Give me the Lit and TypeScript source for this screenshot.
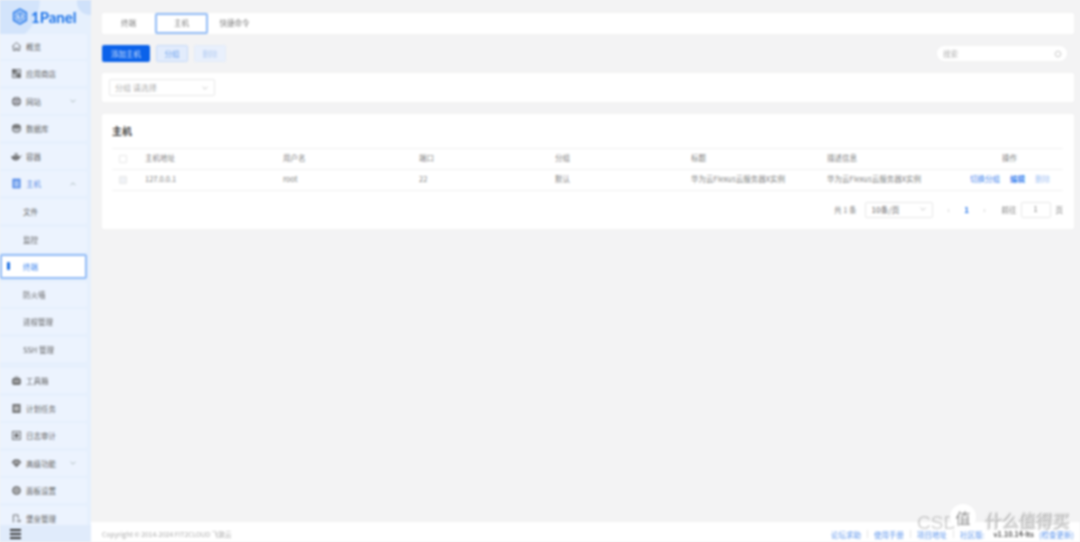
import { LitElement, html, css, svg } from "lit";
import { customElement } from "lit/decorators.js";

const icons: Record<string, unknown> = {
  home: svg`<path d="M1.500 7 7 2l5.500 5M3 6.500V12h3V9h2v3h3V6.500" />`,
  apps: svg`<rect x="2" y="2" width="4.200" height="4.200" fill="#555"/><rect x="7.800" y="2" width="4.200" height="4.200"/><rect x="2" y="7.800" width="4.200" height="4.200"/><rect x="7.800" y="7.800" width="4.200" height="4.200" fill="#555"/>`,
  globe: svg`<circle cx="7" cy="7" r="5.200" fill="#666"/><path d="M2 7h10M7 2c-3 3-3 7 0 10M7 2c3 3 3 7 0 10" stroke="#dde"/>`,
  db: svg`<ellipse cx="7" cy="4.500" rx="5" ry="2.500" fill="#666"/><path d="M2 4.500V9.500c0 1.400 2.200 2.500 5 2.500s5-1.100 5-2.500V4.500M2 7.500c0 1.400 2.200 2.500 5 2.500s5-1.100 5-2.500"/>`,
  box: svg`<path d="M1 7h10c0 3-2 4.500-5 4.500S1 10 1 7Z" fill="#666"/><path d="M11 7.500c1.500 0 2-1 2-2M5 3.500h3v3H5z"/>`,
  host: svg`<rect x="2.500" y="1.500" width="9" height="11" fill="#4a86e8" stroke="#2f6fe0"/><path d="M4 5h6M4 7.500h6M4 10h6" stroke="#e8f1fe"/>`,
  tool: svg`<rect x="2" y="4.500" width="10" height="7.500" rx="1.500" fill="#666"/><path d="M5 4.500V2.500h4v2M2 8h10" stroke="#777"/><path d="M3.500 8h7" stroke="#ddd"/>`,
  plan: svg`<rect x="2.500" y="2" width="9" height="10" fill="#666"/><path d="M4 5h6M4 7h6M4 9h6" stroke="#ddd"/>`,
  log: svg`<rect x="2" y="2" width="10" height="10"/><rect x="5" y="5" width="4" height="4" fill="#666"/>`,
  gem: svg`<path d="M1.500 5.500 4 2.500h6l2.500 3L7 11.500Z" fill="#666"/><path d="M4 5.500h6" stroke="#ddd"/>`,
  gear: svg`<circle cx="7" cy="7" r="5" fill="#777"/><circle cx="7" cy="7" r="2.500" stroke="#ddd"/>`,
  tx: svg`<path d="M3 12V2.500h6V7M7 10h5M10 8l2 2-2 2" />`,
};

type Nav = { label: string; icon?: string; chev?: "up" | "down"; cls?: string };
const nav: Nav[] = [
  { label: "概览", icon: "home" },
  { label: "应用商店", icon: "apps" },
  { label: "网站", icon: "globe", chev: "down" },
  { label: "数据库", icon: "db" },
  { label: "容器", icon: "box" },
  { label: "主机", icon: "host", chev: "up", cls: "open" },
  { label: "文件", cls: "sub" },
  { label: "监控", cls: "sub" },
  { label: "终端", cls: "sub active" },
  { label: "防火墙", cls: "sub" },
  { label: "进程管理", cls: "sub" },
  { label: "SSH 管理", cls: "sub last" },
  { label: "工具箱", icon: "tool" },
  { label: "计划任务", icon: "plan" },
  { label: "日志审计", icon: "log" },
  { label: "高级功能", icon: "gem", chev: "down" },
  { label: "面板设置", icon: "gear" },
  { label: "堡垒管理", icon: "tx" },
];

const chevron = (dir: string) => html`<svg class="chev" viewBox="0 0 10 10"><path d=${dir === "up" ? "M2 6.500 5 3.500l3 3" : "M2 3.500 5 6.500l3-3"} /></svg>`;

@customElement("app-root")
export class AppRoot extends LitElement {
  static styles = css`
    :host { display: block; width: 1080px; height: 542px; overflow: hidden; position: relative; background: #f3f3f4;
      font-family: "Noto Sans CJK SC", "Liberation Sans", sans-serif; font-size: 7.5px; color: #808080; }
    .page { display: flex; width: 1080px; height: 542px; filter: blur(0.85px); }
    .side { width: 91px; flex: none; display: flex; flex-direction: column; background: #e6f0fd; position: relative; overflow: hidden; }
    .deco1 { position: absolute; left: -22px; top: -45px; width: 62px; height: 85px; border-radius: 50%; background: #d3e4fb; }
    .deco2 { position: absolute; left: 77px; top: -11px; width: 26px; height: 26px; border-radius: 50%; background: #cfe1fa; }
    .logo { height: 33.5px; flex: none; display: flex; align-items: center; gap: 3px; padding-left: 12px; position: relative; box-sizing: border-box;
      color: #1b72e8; font: 700 15px "Lato", "Liberation Sans", sans-serif; }
    .logo svg { width: 16px; height: 17px; fill: none; stroke: #1b72e8; stroke-width: 1.5; }
    .menu { flex: 1; min-height: 0; overflow: hidden; display: flex; flex-direction: column; position: relative; }
    .item { flex: none; height: 25px; margin-bottom: 2.6px; width: 87px; box-sizing: border-box; display: flex; align-items: center; gap: 4px; padding-left: 11px;
      background: #ecf3fe; border-radius: 0 3px 3px 0; color: #646464; position: relative; }
    .item .ic { width: 11px; height: 11px; fill: none; stroke: #555; stroke-width: 1.2; flex: none; opacity: 0.85; }
    .item.open { color: #5b8fe3; }
    .item.sub { padding-left: 23px; }
    .item.last { margin-bottom: 6px; }
    .item.active { background: #fff; color: #3f85ee; border: 2px solid #8fbaf6; border-radius: 2px; padding-left: 21px; }
    .item.active::before { content: ""; position: absolute; left: 5px; top: 6px; width: 3px; height: 8px; background: #1b6fe4; border-radius: 1px; }
    .chev { width: 8px; height: 8px; fill: none; stroke: #9aa; stroke-width: 1; margin-left: auto; margin-right: 10px; }
    .collapse { height: 17px; flex: none; display: flex; align-items: center; padding-left: 10px; background: #e0ebfb; position: relative; }
    .collapse svg { width: 11px; height: 10px; }
    .main { flex: 1; min-width: 0; display: flex; flex-direction: column; }
    .content { flex: 1; padding: 13px 6px 0 11px; display: flex; flex-direction: column; }
    .tabs { height: 21px; background: #fff; display: flex; align-items: center; border-radius: 2px; }
    .tab { width: 53px; text-align: center; height: 21px; line-height: 19px; box-sizing: border-box; color: #808080; }
    .tab.on { border: 2px solid #8fbaf6; border-radius: 2px; line-height: 15px; }
    .toolbar { display: flex; align-items: center; gap: 6px; margin-top: 11px; height: 17px; }
    .btn { height: 17px; width: 32px; display: flex; align-items: center; justify-content: center; box-sizing: border-box; border-radius: 2px; }
    .btn.primary { width: 48px; background: #0b62ea; color: #cfe0fb; }
    .btn.plain { background: #e2ecfc; border: 1px solid #c6daf8; color: #6ea2ee; }
    .btn.off { background: #e9f0fc; border: 1px solid #e2ebfa; color: #b5cdf3; }
    .search { margin-left: auto; margin-right: 7px; width: 130px; height: 15px; border-radius: 7.5px; background: #fff; display: flex; align-items: center; justify-content: space-between;
      padding: 0 5px 0 6px; box-sizing: border-box; color: #b3b3b3; }
    .search svg { width: 8px; height: 8px; fill: none; stroke: #bbb; stroke-width: 1; }
    .filter { margin-top: 11px; height: 29px; background: #fff; display: flex; align-items: center; padding-left: 7px; border-radius: 2px; }
    .select { box-sizing: border-box; border: 1px solid #e8e8e8; border-radius: 2px; height: 17px; width: 106px; display: flex; align-items: center; padding-left: 5px; color: #b0b0b0; font-size: 8px; }
    .select .chev { margin-right: 5px; stroke: #bbb; }
    .card { margin-top: 12px; height: 115px; background: #fff; padding: 0 11px 0 10px; border-radius: 2px; box-sizing: border-box; }
    h2 { margin: 0; height: 34px; line-height: 34px; font-size: 10px; font-weight: 700; color: #444; }
    .row { display: grid; grid-template-columns: 33px 138px 136px 136px 136px 136px 136px 1fr; height: 21px; align-items: center; border-top: 1px solid #f1f1f1; box-sizing: border-box; padding-bottom: 3px; color: #808080; }
    .row.body { border-bottom: 1px solid #f1f1f1; height: 22px; }
    .cb { width: 8px; height: 8px; margin: 2px 0 0 7px; border: 1px solid #e8e8e8; border-radius: 1px; box-sizing: border-box; background: #fff; }
    .body .cb { background: #f0f2f6; }
    .op-h { padding-left: 39px; }
    .ops { display: flex; gap: 10px; padding-left: 7px; color: #3f85ee; white-space: nowrap; }
    .ops .dim { color: #a9c7f5; }
    .ops .bold { font-weight: 700; }
    .pager { display: flex; align-items: center; justify-content: flex-end; height: 16px; margin-top: 11px; color: #808080; }
    .size { box-sizing: border-box; width: 68px; height: 16px; border: 1px solid #e8e8e8; border-radius: 2px; display: flex; align-items: center; padding: 0 0 2px 6px; margin: 0 15px 0 8px; color: #666; font-size: 8px; }
    .size .chev { margin-right: 5px; stroke: #bbb; }
    .pg { display: flex; align-items: center; width: 38px; justify-content: space-between; margin-right: 16px; color: #bbb; padding-bottom: 2px; }
    .pg b { color: #2a78ea; font-size: 8px; }
    .pager > span { padding-bottom: 2px; }
    .num { box-sizing: border-box; width: 30px; height: 16px; border: 1px solid #e8e8e8; border-radius: 2px; text-align: center; line-height: 12px; margin: 0 5px 0 4px; }
    .foot { height: 20px; flex: none; box-sizing: border-box; padding: 4px 6px 0 11px; background: #fff; display: flex; align-items: center; color: #aaa; font-size: 6.7px; white-space: nowrap; }
    .links { margin-left: auto; display: flex; align-items: center; gap: 6px; color: #5c94ec; font-size: 7.500px; }
    .links i { width: 1px; height: 8px; background: #e5e5e5; }
    .links .ver { color: #555; font-size: 7px; font-weight: 700; margin: 0 -1px 0 3px; }
    .wm { position: absolute; left: 917px; top: 504px; display: flex; align-items: flex-start; pointer-events: none; filter: blur(0.85px); }
    .wm .csdn { margin: 8px -7px 0 0; white-space: nowrap; color: rgba(140, 140, 140, .4); font: 19px "Liberation Sans", sans-serif; }
    .wm .badge { width: 26px; height: 26px; border-radius: 50%; background: #fff; display: flex; align-items: center; justify-content: center; color: #8d8d8d; font: 15px "Noto Sans CJK SC", sans-serif; }
    .wm .name { margin: 3px 0 0 8px; font: 17px "Noto Sans CJK SC", sans-serif; color: rgba(255, 255, 255, .75); text-shadow: 1px 0 1px rgba(110,110,110,.7), 0 1px 1px rgba(110,110,110,.5); white-space: nowrap; }
  `;

  render() {
    return html`
      <div class="page">
        <aside class="side">
          <div class="deco1"></div><div class="deco2"></div>
          <div class="logo">
            <svg viewBox="0 0 16 17"><path d="M8 1.200 14.300 4.800v7.400L8 15.800 1.700 12.200V4.800Z"/><circle cx="8" cy="8.500" r="4" stroke-width="1"/><path d="M7 7.200 8.300 6.400v4.400" stroke-width="1.200"/></svg>
            <span>1Panel</span>
          </div>
          <div class="menu">
            ${nav.map((n) => html`
              <div class="item ${n.cls ?? ""}">
                ${n.icon ? html`<svg class="ic" viewBox="0 0 14 14">${icons[n.icon]}</svg>` : ""}
                <span>${n.label}</span>
                ${n.chev ? chevron(n.chev) : ""}
              </div>`)}
          </div>
          <div class="collapse">
            <svg viewBox="0 0 11 10"><path d="M0 1h11M0 5h11M0 9h11" stroke="#333" stroke-width="1.800"/></svg>
          </div>
        </aside>
        <div class="main">
          <div class="content">
            <div class="tabs">
              <div class="tab">终端</div>
              <div class="tab on">主机</div>
              <div class="tab">快捷命令</div>
            </div>
            <div class="toolbar">
              <div class="btn primary">添加主机</div>
              <div class="btn plain">分组</div>
              <div class="btn off">删除</div>
              <div class="search"><span>搜索</span><svg viewBox="0 0 10 10"><circle cx="5" cy="5" r="3.500"/></svg></div>
            </div>
            <div class="filter">
              <div class="select"><span>分组 请选择</span>${chevron("down")}</div>
            </div>
            <div class="card">
              <h2>主机</h2>
              <div class="row">
                <div><div class="cb"></div></div>
                <div>主机地址</div><div>用户名</div><div>端口</div><div>分组</div><div>标题</div><div>描述信息</div>
                <div class="op-h">操作</div>
              </div>
              <div class="row body">
                <div><div class="cb"></div></div>
                <div>127.0.0.1</div><div>root</div><div>22</div><div>默认</div>
                <div>华为云Flexus云服务器X实例</div><div>华为云Flexus云服务器X实例</div>
                <div class="ops"><span>切换分组</span><span class="bold">编辑</span><span class="dim">删除</span></div>
              </div>
              <div class="pager">
                <span>共 1 条</span>
                <div class="size"><span>10条/页</span>${chevron("down")}</div>
                <div class="pg"><span>‹</span><b>1</b><span>›</span></div>
                <span>前往</span><div class="num">1</div><span>页</span>
              </div>
            </div>
          </div>
          <footer class="foot">
            <span>Copyright © 2014-2024 FIT2CLOUD 飞致云</span>
            <div class="links">
              <span>论坛求助</span><i></i><span>使用手册</span><i></i><span>项目地址</span><i></i><span>社区版:</span>
              <span class="ver">v1.10.14-lts</span><span>(检查更新)</span>
            </div>
          </footer>
        </div>
      </div>
      <div class="wm"><span class="csdn">CSD</span><div class="badge">值</div><span class="name">什么值得买</span></div>
    `;
  }
}
